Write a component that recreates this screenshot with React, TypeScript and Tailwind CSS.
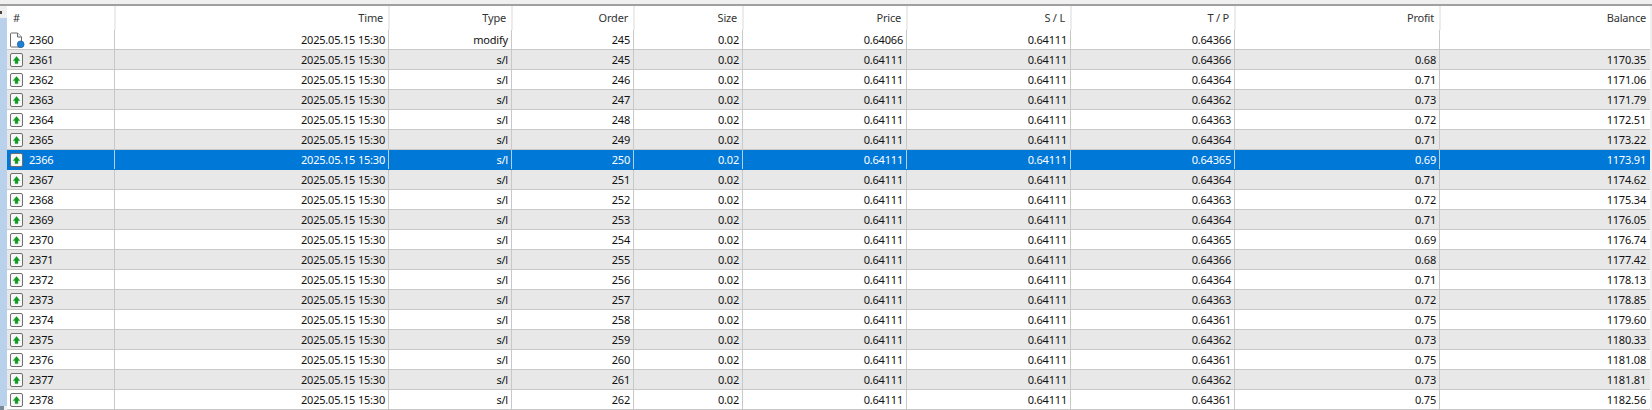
import React from 'react';

const colWidths = ['w-[108px]', 'w-[274px]', 'w-[123px]', 'w-[122px]', 'w-[109px]', 'w-[164px]', 'w-[164px]', 'w-[164px]', 'w-[205px]', 'w-[211px]'];
const headerWidths = ['w-[109px]', 'w-[274px]', 'w-[123px]', 'w-[122px]', 'w-[109px]', 'w-[164px]', 'w-[164px]', 'w-[164px]', 'w-[205px]', 'w-[210px]'];
const headers = ['#', 'Time', 'Type', 'Order', 'Size', 'Price', 'S / L', 'T / P', 'Profit', 'Balance'];

type Row = [number, number, string, string, string, string];

// id, order, tp, profit, balance, price
const rows: Row[] = [
  [2361, 245, '0.64366', '0.68', '1170.35', '0.64111'],
  [2362, 246, '0.64364', '0.71', '1171.06', '0.64111'],
  [2363, 247, '0.64362', '0.73', '1171.79', '0.64111'],
  [2364, 248, '0.64363', '0.72', '1172.51', '0.64111'],
  [2365, 249, '0.64364', '0.71', '1173.22', '0.64111'],
  [2366, 250, '0.64365', '0.69', '1173.91', '0.64111'],
  [2367, 251, '0.64364', '0.71', '1174.62', '0.64111'],
  [2368, 252, '0.64363', '0.72', '1175.34', '0.64111'],
  [2369, 253, '0.64364', '0.71', '1176.05', '0.64111'],
  [2370, 254, '0.64365', '0.69', '1176.74', '0.64111'],
  [2371, 255, '0.64366', '0.68', '1177.42', '0.64111'],
  [2372, 256, '0.64364', '0.71', '1178.13', '0.64111'],
  [2373, 257, '0.64363', '0.72', '1178.85', '0.64111'],
  [2374, 258, '0.64361', '0.75', '1179.60', '0.64111'],
  [2375, 259, '0.64362', '0.73', '1180.33', '0.64111'],
  [2376, 260, '0.64361', '0.75', '1181.08', '0.64111'],
  [2377, 261, '0.64362', '0.73', '1181.81', '0.64111'],
  [2378, 262, '0.64361', '0.75', '1182.56', '0.64111'],
];

const BuyIcon = () => (
  <svg width="13" height="14" viewBox="0 0 13 14" className="shrink-0">
    <rect x="0.5" y="0.5" width="12" height="13" rx="1.5" fill="#f8f8f8" stroke="#6e6e6e" />
    <path d="M6.5 3.6 L9.8 7.6 H7.9 V10.6 H5.1 V7.6 H3.2 Z" fill="#0c9c1e" stroke="#0b8a18" strokeWidth="0.4" />
  </svg>
);

const ModifyIcon = () => (
  <svg width="16" height="16" viewBox="0 0 16 16" className="shrink-0">
    <path d="M1.5 2 a1 1 0 0 1 1 -1 H8.5 L12.5 5 V14 a1 1 0 0 1 -1 1 H2.5 a1 1 0 0 1 -1 -1 Z" fill="#fff" stroke="#6b6b6b" />
    <path d="M8.5 1 V5 H12.5" fill="#eee" stroke="#6b6b6b" />
    <circle cx="11.7" cy="12.3" r="3.4" fill="#1f7fd4" stroke="#14578f" strokeWidth="0.6" />
  </svg>
);

const Cell = ({ i, children, selected }: { i: number; children?: React.ReactNode; selected: boolean }) => (
  <div
    className={`${colWidths[i]} flex h-full shrink-0 items-center justify-end border-r pr-[3px] ${
      selected ? 'border-[#b4cfe8]' : 'border-[#c8c8c8]'
    }`}
  >
    {children}
  </div>
);

const DataRow = ({ row, index }: { row: Row; index: number }) => {
  const [id, order, tp, profit, balance, price] = row;
  const selected = id === 2366;
  const bg = selected ? 'border-[#0078d7] bg-[#0078d7] text-white' : index % 2 === 0 ? 'border-[#c8c8c8] bg-[#e8e8e8]' : 'border-[#c8c8c8] bg-white';
  return (
    <div className={`flex h-5 items-center border-b ${bg}`}>
      <div className={`${colWidths[0]} flex h-full shrink-0 items-center gap-[6px] border-r pl-[3px] ${selected ? 'border-[#b4cfe8]' : 'border-[#c8c8c8]'}`}>
        <BuyIcon />
        <span>{id}</span>
      </div>
      <Cell i={1} selected={selected}>2025.05.15 15:30</Cell>
      <Cell i={2} selected={selected}>s/l</Cell>
      <Cell i={3} selected={selected}>{order}</Cell>
      <Cell i={4} selected={selected}>0.02</Cell>
      <Cell i={5} selected={selected}>{price}</Cell>
      <Cell i={6} selected={selected}>0.64111</Cell>
      <Cell i={7} selected={selected}>{tp}</Cell>
      <Cell i={8} selected={selected}>{profit}</Cell>
      <div className={`${colWidths[9]} flex h-full shrink-0 items-center justify-end pr-[5px]`}>{balance}</div>
    </div>
  );
};

export default function App() {
  return (
    <div className="h-[410px] w-[1652px] overflow-hidden bg-[#f0f0f0] font-['Noto_Sans',sans-serif] text-[11px] leading-none tracking-[-0.2px] text-[#111]">
      <div className="h-[4px] bg-[#f0f0f0]" />
      <div className="h-[2px] bg-[#a0a0a0]" />
      <div className="flex h-[404px]">
        <div className="flex w-[7px] shrink-0 flex-col">
          <div className="flex h-[12px] items-center bg-[#f0f0f0]">
            <div className="h-[3px] w-[2px] bg-[#444]" />
          </div>
          <div className="grow bg-[#b9d1ea]" />
          <div className="h-[4px] w-[4px] bg-[#7a8a99]" />
        </div>
        <div className="w-[1643px] shrink-0 bg-white">
          <div className="flex h-[24px] text-[#333]">
            {headers.map((h, i) => (
              <div
                key={h}
                className={`${headerWidths[i]} flex h-full shrink-0 items-center pr-[5px] pb-[1px] ${
                  i === 0 ? 'justify-start pl-[6px]' : 'justify-end'
                } ${i < 9 ? 'border-r-2 border-[#ececec]' : ''}`}
              >
                {h}
              </div>
            ))}
          </div>
          <div className="flex h-5 items-center border-b border-[#c8c8c8] bg-white">
            <div className={`${colWidths[0]} flex h-full shrink-0 items-center gap-[4px] border-r border-[#c8c8c8] pl-[2px]`}>
              <ModifyIcon />
              <span>2360</span>
            </div>
            <Cell i={1} selected={false}>2025.05.15 15:30</Cell>
            <Cell i={2} selected={false}>modify</Cell>
            <Cell i={3} selected={false}>245</Cell>
            <Cell i={4} selected={false}>0.02</Cell>
            <Cell i={5} selected={false}>0.64066</Cell>
            <Cell i={6} selected={false}>0.64111</Cell>
            <Cell i={7} selected={false}>0.64366</Cell>
            <Cell i={8} selected={false} />
          </div>
          {rows.map((row, index) => (
            <DataRow key={row[0]} row={row} index={index} />
          ))}
        </div>
        <div className="w-[2px] shrink-0 bg-[#f0f0f0]" />
      </div>
    </div>
  );
}
